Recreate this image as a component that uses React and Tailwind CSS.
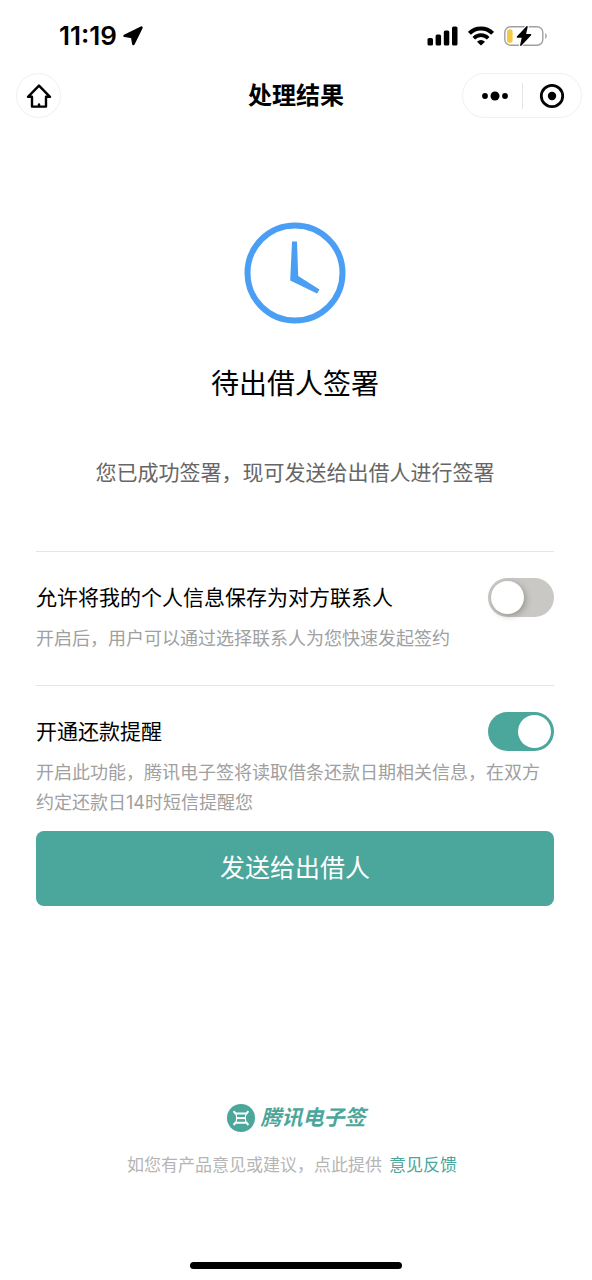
import React, { useState } from 'react';

const StatusBar = () => {
	return (
		<div className="flex h-[71px] items-center justify-between pl-[59px] pr-11">
			<div className="flex items-center gap-1.5">
				<span className="text-[26px] font-semibold leading-8">11:19</span>
				<svg width="20" height="20" viewBox="0 0 20 20" aria-hidden="true">
					<path
						d="M18.4 1.6 L10.4 18 L9.2 11 L1.6 9.8 Z"
						fill="#000"
						stroke="#000"
						strokeWidth="2.6"
						strokeLinejoin="round"
					/>
				</svg>
			</div>
			<div className="flex items-center gap-2.5">
				<svg width="31" height="20" viewBox="0 0 31 20" aria-hidden="true">
					<rect x="0.5" y="12" width="5.5" height="7.5" rx="1.6" />
					<rect x="8.6" y="8.5" width="5.5" height="11" rx="1.6" />
					<rect x="16.8" y="4.5" width="5.5" height="15" rx="1.6" />
					<rect x="25" y="0.5" width="5.5" height="19" rx="1.6" />
				</svg>
				<svg width="26" height="20" viewBox="0 0 26 20" aria-hidden="true">
					<path d="M1.4 7.4 A16.2 16.2 0 0 1 24.6 7.4" fill="none" stroke="#000" strokeWidth="4.2" />
					<path d="M5.8 12.2 A10 10 0 0 1 20.2 12.2" fill="none" stroke="#000" strokeWidth="3.6" />
					<path d="M13 19.6 L9 15.8 A5.6 5.6 0 0 1 17 15.8 Z" />
				</svg>
				<svg width="44" height="20" viewBox="0 0 44 20" aria-hidden="true">
					<rect x="0.8" y="0.8" width="38" height="18.4" rx="5.6" fill="none" stroke="#a0a0a0" strokeWidth="1.4" />
					<rect x="3" y="3.2" width="5.6" height="13.6" rx="2.6" fill="#f4c945" />
					<path d="M41.2 7 A3.6 3.6 0 0 1 41.2 13 Z" fill="#a0a0a0" />
					<path d="M23 0.8 L13.4 11 H18.6 L16.8 19.2 L26.6 8.8 H21.2 Z" fill="#fff" stroke="#fff" strokeWidth="3.4" />
					<path
						d="M23 0.8 L13.4 11 H18.6 L16.8 19.2 L26.6 8.8 H21.2 Z"
						stroke="#000"
						strokeWidth="1.4"
						strokeLinejoin="round"
					/>
				</svg>
			</div>
		</div>
	);
};

const NavBar = () => {
	return (
		<header className="grid grid-cols-[1fr_auto_1fr] items-center pt-0.5">
			<button
				type="button"
				aria-label="首页"
				className="ml-4 flex size-[45px] items-center justify-center rounded-full border border-[#f0f0f0]"
			>
				<svg width="26" height="26" viewBox="0 0 26 26" fill="none" stroke="#000" strokeWidth="2.4" strokeLinejoin="round" strokeLinecap="round" aria-hidden="true">
					<path d="M13 2.6 L24 13.8 H20 V23.6 H6 V13.8 H2 Z" />
					<path d="M13 21.4 V23" />
				</svg>
			</button>
			<h1 className="text-2xl font-bold">处理结果</h1>
			<div className="mr-2.5 flex h-[45px] w-[120px] items-center justify-self-end rounded-full border border-[#f0f0f0]">
				<button type="button" aria-label="更多" className="flex h-full w-[59px] items-center justify-center pl-1">
					<svg width="28" height="10" viewBox="0 0 28 10" aria-hidden="true">
						<circle cx="4" cy="5" r="2.9" />
						<circle cx="14" cy="5" r="4.5" />
						<circle cx="24" cy="5" r="2.9" />
					</svg>
				</button>
				<span className="h-[26px] w-px bg-[#e6e6e6]" />
				<button type="button" aria-label="关闭" className="flex h-full flex-1 items-center justify-center">
					<svg width="26" height="26" viewBox="0 0 26 26" aria-hidden="true">
						<circle cx="13" cy="13" r="10.7" fill="none" stroke="#000" strokeWidth="2.8" />
						<circle cx="13" cy="13" r="4.2" />
					</svg>
				</button>
			</div>
		</header>
	);
};

const SwitchRow = ({ id, title, desc, checked, onChange }) => {
	return (
		<div className="border-t border-[#e5e5e5] pt-[26px]">
			<div className="flex items-center justify-between">
				<label htmlFor={id} className="text-[21px] leading-[30px]">
					{title}
				</label>
				<input
					type="checkbox"
					role="switch"
					id={id}
					checked={checked}
					onChange={onChange}
					className="h-[39px] w-[66px] shrink-0 cursor-pointer appearance-none rounded-full bg-[#c9c8c4] p-[3px] before:block before:size-[33px] before:rounded-full before:bg-white before:shadow-[2px_2px_6px_rgba(0,0,0,0.25)] checked:bg-[#4ba69b] checked:before:translate-x-[27px] checked:before:shadow-none"
				/>
			</div>
			<p className="mt-[7px] text-lg leading-[30px] text-[#a0a0a0]">{desc}</p>
		</div>
	);
};

const App = () => {
	const [settings, setSettings] = useState({
		saveContact: false,
		repayRemind: true
	});

	const handleToggle = (e) => {
		setSettings({
			...settings,
			[e.target.id]: e.target.checked
		});
	};

	return (
		<div className="flex min-h-screen flex-col bg-white font-['Inter','Noto_Sans_CJK_SC',sans-serif] text-black">
			<StatusBar />
			<NavBar />

			<main className="flex flex-col pl-9 pr-[38px] pt-[104px]">
				<div className="flex flex-col items-center text-center">
					<svg width="102" height="102" viewBox="0 0 102 102" aria-hidden="true">
						<circle cx="51" cy="51" r="47.5" fill="none" stroke="#4a9ff5" strokeWidth="6" />
						<path d="M48 19.5 H53 L54.2 54 L75.5 67.5 L73 71.5 L46.2 58.5 Z" fill="#4a9ff5" />
					</svg>
					<h2 className="mt-10 text-[28px] leading-10">待出借人签署</h2>
					<p className="mt-[54px] text-[21px] leading-[30px] text-[#666]">您已成功签署，现可发送给出借人进行签署</p>
				</div>

				<div className="mt-[63px] flex flex-col gap-[31px]">
					<SwitchRow
						id="saveContact"
						title="允许将我的个人信息保存为对方联系人"
						desc="开启后，用户可以通过选择联系人为您快速发起签约"
						checked={settings.saveContact}
						onChange={handleToggle}
					/>
					<SwitchRow
						id="repayRemind"
						title="开通还款提醒"
						desc="开启此功能，腾讯电子签将读取借条还款日期相关信息，在双方约定还款日14时短信提醒您"
						checked={settings.repayRemind}
						onChange={handleToggle}
					/>
				</div>

				<button type="button" className="mt-[13px] h-[75px] w-full rounded-lg bg-[#4ba69b] text-[25px] text-white">
					发送给出借人
				</button>
			</main>

			<footer className="mt-auto flex flex-col items-center pb-[11px]">
				<div className="flex items-center gap-1.5 text-[#4ba69b]">
					<svg width="28" height="28" viewBox="0 0 28 28" aria-hidden="true">
						<circle cx="14" cy="14" r="14" fill="#4ba69b" />
						<g fill="none" stroke="#fff" strokeWidth="2">
							<path d="M6.6 7.2 L8.4 9.4 H19.6 L21.4 7.2" />
							<path d="M6.6 21 L8.4 18.8 H19.6 L21.4 21" />
							<path d="M9.6 14.1 H18.4" />
							<path d="M9 9.8 Q10.6 14.1 9 18.4 M19 9.8 Q17.4 14.1 19 18.4" strokeWidth="1.2" />
						</g>
					</svg>
					<span className="text-[21px] font-bold italic leading-[30px]">腾讯电子签</span>
				</div>
				<p className="mt-[17px] flex gap-[7px] pr-2 text-[17px] leading-[30px] text-[#b5b5b5]">
					如您有产品意见或建议，点此提供
					<a href="#feedback" className="text-[#4ba69b]">意见反馈</a>
				</p>
				<div className="mt-[82px] h-[7px] w-[212px] rounded-full bg-black" />
			</footer>
		</div>
	);
};

export default App;
